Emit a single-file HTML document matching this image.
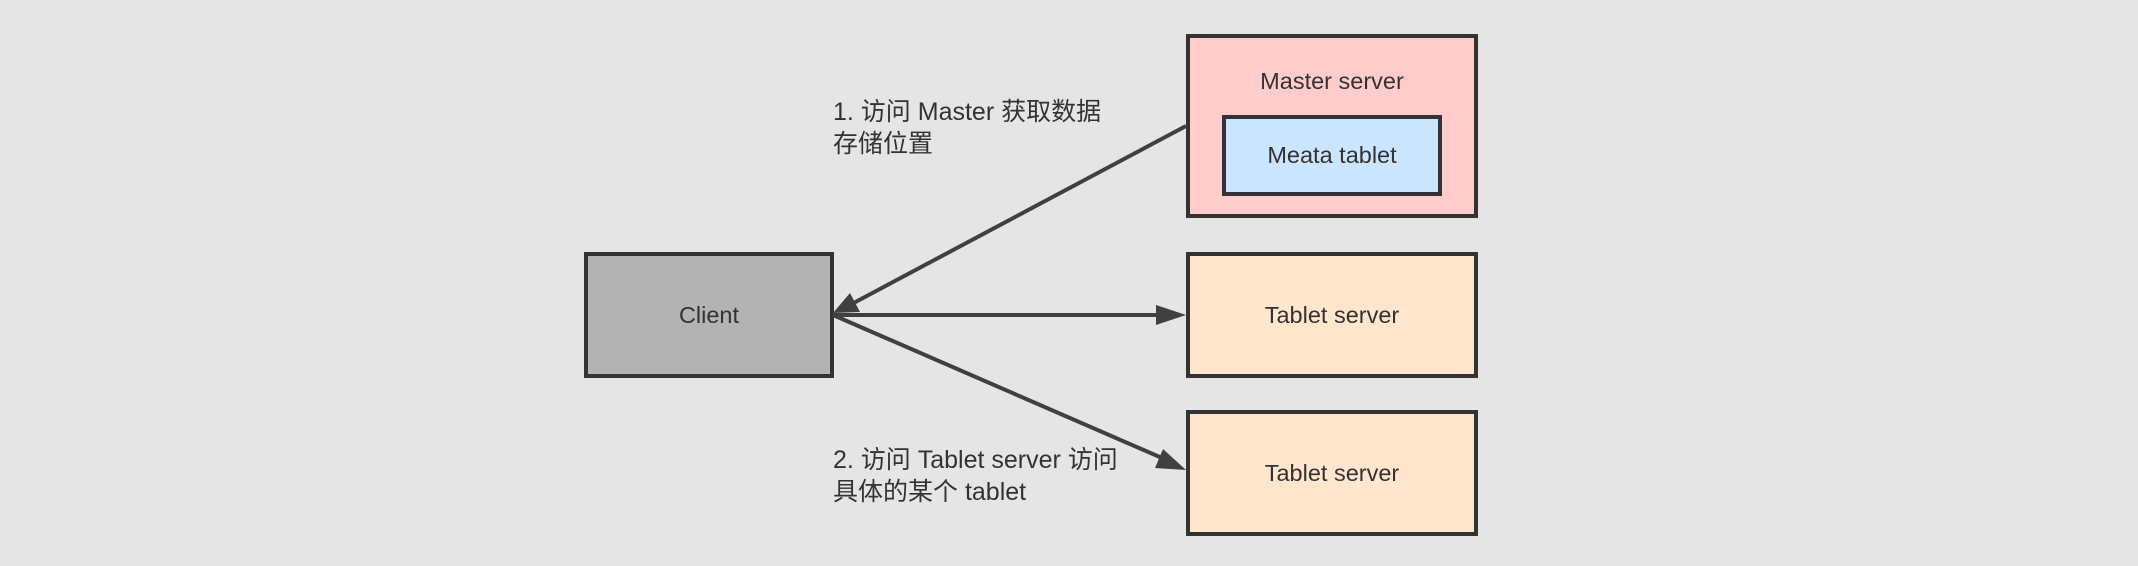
<!DOCTYPE html>
<html><head><meta charset="utf-8"><style>
html,body{margin:0;padding:0;background:#e5e5e5;}
svg{display:block}
text{font-family:"Liberation Sans","Noto Sans CJK SC",sans-serif;fill:#333;}
</style></head><body>
<svg width="2138" height="566" viewBox="0 0 2138 566" xmlns="http://www.w3.org/2000/svg">
<rect width="2138" height="566" fill="#e5e5e5"/>
<g stroke="#333" stroke-width="4">
<rect x="586" y="254" width="246" height="122" fill="#b3b3b3"/>
<rect x="1188" y="36" width="288" height="180" fill="#ffcccc"/>
<rect x="1224" y="117" width="216" height="77" fill="#cce5ff"/>
<rect x="1188" y="254" width="288" height="122" fill="#ffe6cc"/>
<rect x="1188" y="412" width="288" height="122" fill="#ffe6cc"/>
</g>
<g stroke="#404040" stroke-width="4" fill="none">
<line x1="1186" y1="126" x2="848" y2="306"/>
<line x1="833" y1="315" x2="1160" y2="315"/>
<line x1="833" y1="315" x2="1162" y2="458"/>
</g>
<g fill="#404040">
<polygon points="833,313 850,293 860,312"/>
<polygon points="1186,315 1156,305 1156,325"/>
<polygon points="1186,470 1155,468 1163,449"/>
</g>
<g font-size="23.5" text-anchor="middle">
<text x="709" y="323">Client</text>
<text x="1332" y="89">Master server</text>
<text x="1332" y="163">Meata tablet</text>
<text x="1332" y="323">Tablet server</text>
<text x="1332" y="481">Tablet server</text>
</g>
<g font-size="25">
<text x="833" y="120">1. 访问 Master 获取数据</text>
<text x="833" y="152">存储位置</text>
<text x="833" y="468">2. 访问 Tablet server 访问</text>
<text x="833" y="500">具体的某个 tablet</text>
</g>
</svg>
</body></html>
